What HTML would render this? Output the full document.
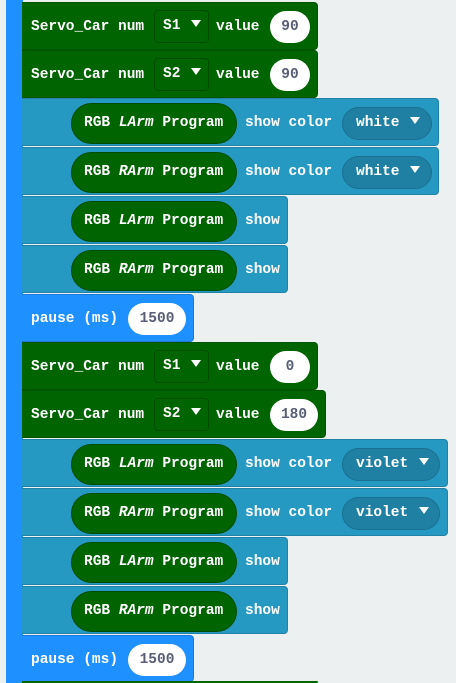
<!DOCTYPE html>
<html style="height:683px;overflow:hidden"><head><meta charset="utf-8"><style>
html,body{margin:0;width:456px;height:683px;overflow:hidden}
body{background:#ecf0f1;position:relative;font-family:"Liberation Mono",monospace;font-weight:bold;font-size:14.5px;color:#fff}
.bar{position:absolute;left:6px;top:0;width:17px;height:683px;background:#1e90ff}
.b{position:absolute;left:22px;height:48px;border-radius:0 4px 4px 0;box-sizing:border-box;border:1px solid rgba(0,0,0,.15);border-left:none}
.g{background:#006400}
.c{background:#2699c3}
.p{background:#1e90ff}
.t{position:absolute;top:1px;line-height:47px;white-space:pre}
.dd{position:absolute;top:7px;height:33px;box-sizing:border-box;border:1px solid #004d00;border-radius:4px;line-height:31px;padding-left:8px;white-space:pre}
.num{position:absolute;top:8px;height:32px;border-radius:16px;background:#fff;color:#575e75;text-align:center;line-height:32px}
.pill{position:absolute;left:49px;top:4px;width:166px;height:41px;border-radius:21px;background:#006400;border:1px solid #004d00;box-sizing:border-box;line-height:39px;padding-left:12px;white-space:pre}
.cd{position:absolute;top:8px;height:33px;border-radius:17px;background:#1f80a3;border:1px solid #1a7090;box-sizing:border-box;line-height:31px;padding-left:13px;white-space:pre}
.ar{display:inline-block;width:0;height:0;border-left:5.5px solid transparent;border-right:5.5px solid transparent;border-top:7px solid #fff;vertical-align:2px;margin-left:2px}
i{font-style:italic}
</style></head><body>
<div class="bar"></div>

<div class="b g" style="top:2px;width:296px"><span class="t" style="left:9px">Servo_Car num</span><div class="dd" style="left:132px;width:55px">S1 <span class="ar"></span></div><span class="t" style="left:194px">value</span><div class="num" style="left:248px;width:40px">90</div></div>
<div class="b g" style="top:50px;width:296px"><span class="t" style="left:9px">Servo_Car num</span><div class="dd" style="left:132px;width:55px">S2 <span class="ar"></span></div><span class="t" style="left:194px">value</span><div class="num" style="left:248px;width:40px">90</div></div>
<div class="b c" style="top:98px;width:417px"><div class="pill">RGB <i>LArm</i> Program</div><span class="t" style="left:223px">show color</span><div class="cd" style="left:320px;width:90px">white <span class="ar"></span></div></div>
<div class="b c" style="top:147px;width:417px"><div class="pill">RGB <i>RArm</i> Program</div><span class="t" style="left:223px">show color</span><div class="cd" style="left:320px;width:90px">white <span class="ar"></span></div></div>
<div class="b c" style="top:196px;width:266px"><div class="pill">RGB <i>LArm</i> Program</div><span class="t" style="left:223px">show</span></div>
<div class="b c" style="top:245px;width:266px"><div class="pill">RGB <i>RArm</i> Program</div><span class="t" style="left:223px">show</span></div>
<div class="b p" style="top:294px;width:172px"><span class="t" style="left:9px">pause (ms)</span><div class="num" style="left:106px;width:58px">1500</div></div>

<div class="b g" style="top:342px;width:296px"><span class="t" style="left:9px">Servo_Car num</span><div class="dd" style="left:132px;width:55px">S1 <span class="ar"></span></div><span class="t" style="left:194px">value</span><div class="num" style="left:248px;width:40px">0</div></div>
<div class="b g" style="top:390px;width:304px"><span class="t" style="left:9px">Servo_Car num</span><div class="dd" style="left:132px;width:55px">S2 <span class="ar"></span></div><span class="t" style="left:194px">value</span><div class="num" style="left:248px;width:48px">180</div></div>
<div class="b c" style="top:439px;width:426px"><div class="pill">RGB <i>LArm</i> Program</div><span class="t" style="left:223px">show color</span><div class="cd" style="left:320px;width:98px">violet <span class="ar"></span></div></div>
<div class="b c" style="top:488px;width:426px"><div class="pill">RGB <i>RArm</i> Program</div><span class="t" style="left:223px">show color</span><div class="cd" style="left:320px;width:98px">violet <span class="ar"></span></div></div>
<div class="b c" style="top:537px;width:266px"><div class="pill">RGB <i>LArm</i> Program</div><span class="t" style="left:223px">show</span></div>
<div class="b c" style="top:586px;width:266px"><div class="pill">RGB <i>RArm</i> Program</div><span class="t" style="left:223px">show</span></div>
<div class="b p" style="top:635px;width:172px;height:47px"><span class="t" style="left:9px">pause (ms)</span><div class="num" style="left:106px;width:58px">1500</div></div>
<div class="b g" style="top:681px;width:296px;height:2px;border:none"></div>
</body></html>
